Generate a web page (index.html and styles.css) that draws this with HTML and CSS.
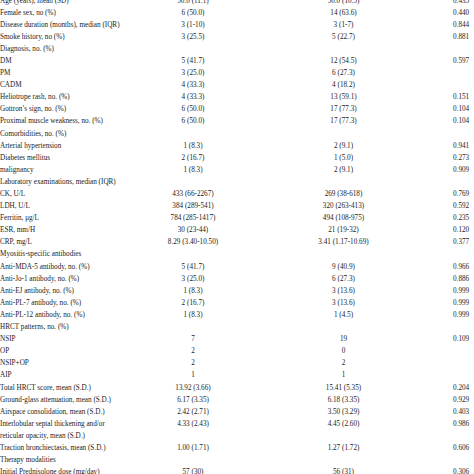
FILE: index.html
```html
<!DOCTYPE html>
<html>
<head>
<meta charset="utf-8">
<link rel="stylesheet" href="styles.css">
</head>
<body>
<div class="table">
  <div class="c1">Age (years), mean (SD)</div><div class="c2">50.0 (11.1)</div><div class="c3">50.0 (10.5)</div><div class="c4">0.435</div>
  <div class="c1">Female sex, no (%)</div><div class="c2">6 (50.0)</div><div class="c3">14 (63.6)</div><div class="c4">0.440</div>
  <div class="c1">Disease duration (months), median (IQR)</div><div class="c2">3 (1-10)</div><div class="c3">3 (1-7)</div><div class="c4">0.844</div>
  <div class="c1">Smoke history, no (%)</div><div class="c2">3 (25.5)</div><div class="c3">5 (22.7)</div><div class="c4">0.881</div>
  <div class="c1">Diagnosis, no. (%)</div><div class="c2"></div><div class="c3"></div><div class="c4"></div>
  <div class="c1">DM</div><div class="c2">5 (41.7)</div><div class="c3">12 (54.5)</div><div class="c4">0.597</div>
  <div class="c1">PM</div><div class="c2">3 (25.0)</div><div class="c3">6 (27.3)</div><div class="c4"></div>
  <div class="c1">CADM</div><div class="c2">4 (33.3)</div><div class="c3">4 (18.2)</div><div class="c4"></div>
  <div class="c1">Heliotrope rash, no. (%)</div><div class="c2">4 (33.3)</div><div class="c3">13 (59.1)</div><div class="c4">0.151</div>
  <div class="c1">Gottron’s sign, no. (%)</div><div class="c2">6 (50.0)</div><div class="c3">17 (77.3)</div><div class="c4">0.104</div>
  <div class="c1">Proximal muscle weakness, no. (%)</div><div class="c2">6 (50.0)</div><div class="c3">17 (77.3)</div><div class="c4">0.104</div>
  <div class="c1">Comorbidities, no. (%)</div><div class="c2"></div><div class="c3"></div><div class="c4"></div>
  <div class="c1">Arterial hypertension</div><div class="c2">1 (8.3)</div><div class="c3">2 (9.1)</div><div class="c4">0.941</div>
  <div class="c1">Diabetes mellitus</div><div class="c2">2 (16.7)</div><div class="c3">1 (5.0)</div><div class="c4">0.273</div>
  <div class="c1">malignancy</div><div class="c2">1 (8.3)</div><div class="c3">2 (9.1)</div><div class="c4">0.909</div>
  <div class="c1">Laboratory examinations, median (IQR)</div><div class="c2"></div><div class="c3"></div><div class="c4"></div>
  <div class="c1">CK, U/L</div><div class="c2">433 (66-2267)</div><div class="c3">269 (38-618)</div><div class="c4">0.769</div>
  <div class="c1">LDH, U/L</div><div class="c2">384 (289-541)</div><div class="c3">320 (263-413)</div><div class="c4">0.592</div>
  <div class="c1">Ferritin, μg/L</div><div class="c2">784 (285-1417)</div><div class="c3">494 (108-975)</div><div class="c4">0.235</div>
  <div class="c1">ESR, mm/H</div><div class="c2">30 (23-44)</div><div class="c3">21 (19-32)</div><div class="c4">0.120</div>
  <div class="c1">CRP, mg/L</div><div class="c2">8.29 (3.40-10.50)</div><div class="c3">3.41 (1.17-10.69)</div><div class="c4">0.377</div>
  <div class="c1">Myositis-specific antibodies</div><div class="c2"></div><div class="c3"></div><div class="c4"></div>
  <div class="c1">Anti-MDA-5 antibody, no. (%)</div><div class="c2">5 (41.7)</div><div class="c3">9 (40.9)</div><div class="c4">0.966</div>
  <div class="c1">Anti-Jo-1 antibody, no. (%)</div><div class="c2">3 (25.0)</div><div class="c3">6 (27.3)</div><div class="c4">0.886</div>
  <div class="c1">Anti-EJ antibody, no. (%)</div><div class="c2">1 (8.3)</div><div class="c3">3 (13.6)</div><div class="c4">0.999</div>
  <div class="c1">Anti-PL-7 antibody, no. (%)</div><div class="c2">2 (16.7)</div><div class="c3">3 (13.6)</div><div class="c4">0.999</div>
  <div class="c1">Anti-PL-12 antibody, no. (%)</div><div class="c2">1 (8.3)</div><div class="c3">1 (4.5)</div><div class="c4">0.999</div>
  <div class="c1">HRCT patterns, no. (%)</div><div class="c2"></div><div class="c3"></div><div class="c4"></div>
  <div class="c1">NSIP</div><div class="c2">7</div><div class="c3">19</div><div class="c4">0.109</div>
  <div class="c1">OP</div><div class="c2">2</div><div class="c3">0</div><div class="c4"></div>
  <div class="c1">NSIP+OP</div><div class="c2">2</div><div class="c3">2</div><div class="c4"></div>
  <div class="c1">AIP</div><div class="c2">1</div><div class="c3">1</div><div class="c4"></div>
  <div class="c1">Total HRCT score, mean (S.D.)</div><div class="c2">13.92 (3.66)</div><div class="c3">15.41 (5.35)</div><div class="c4">0.204</div>
  <div class="c1">Ground-glass attenuation, mean (S.D.)</div><div class="c2">6.17 (3.35)</div><div class="c3">6.18 (3.35)</div><div class="c4">0.929</div>
  <div class="c1">Airspace consolidation, mean (S.D.)</div><div class="c2">2.42 (2.71)</div><div class="c3">3.50 (3.29)</div><div class="c4">0.403</div>
  <div class="c1">Interlobular septal thickening and/or<br>reticular opacity, mean (S.D.)</div><div class="c2">4.33 (2.43)</div><div class="c3">4.45 (2.60)</div><div class="c4">0.986</div>
  <div class="c1">Traction bronchiectasis, mean (S.D.)</div><div class="c2">1.00 (1.71)</div><div class="c3">1.27 (1.72)</div><div class="c4">0.606</div>
  <div class="c1">Therapy modalities</div><div class="c2"></div><div class="c3"></div><div class="c4"></div>
  <div class="c1">Initial Prednisolone dose (mg/day)</div><div class="c2">57 (30)</div><div class="c3">56 (31)</div><div class="c4">0.306</div>
</div>
</body>
</html>
```

FILE: styles.css
```css
html, body {
  margin: 0;
  padding: 0;
  background: #ffffff;
  overflow: hidden;
}
.table {
  display: grid;
  grid-template-columns: 150px 86px 215px 23px;
  margin-top: -5.5px;
  font-family: "Liberation Serif", "Times New Roman", serif;
  font-size: 7.2px;
  line-height: 12.1px;
  color: #222222;
  align-items: start;
}
.c1 {
  white-space: nowrap;
  text-align: left;
}
.c2, .c3 {
  text-align: center;
  white-space: nowrap;
}
.c4 {
  padding-left: 2px;
  white-space: nowrap;
}
```
